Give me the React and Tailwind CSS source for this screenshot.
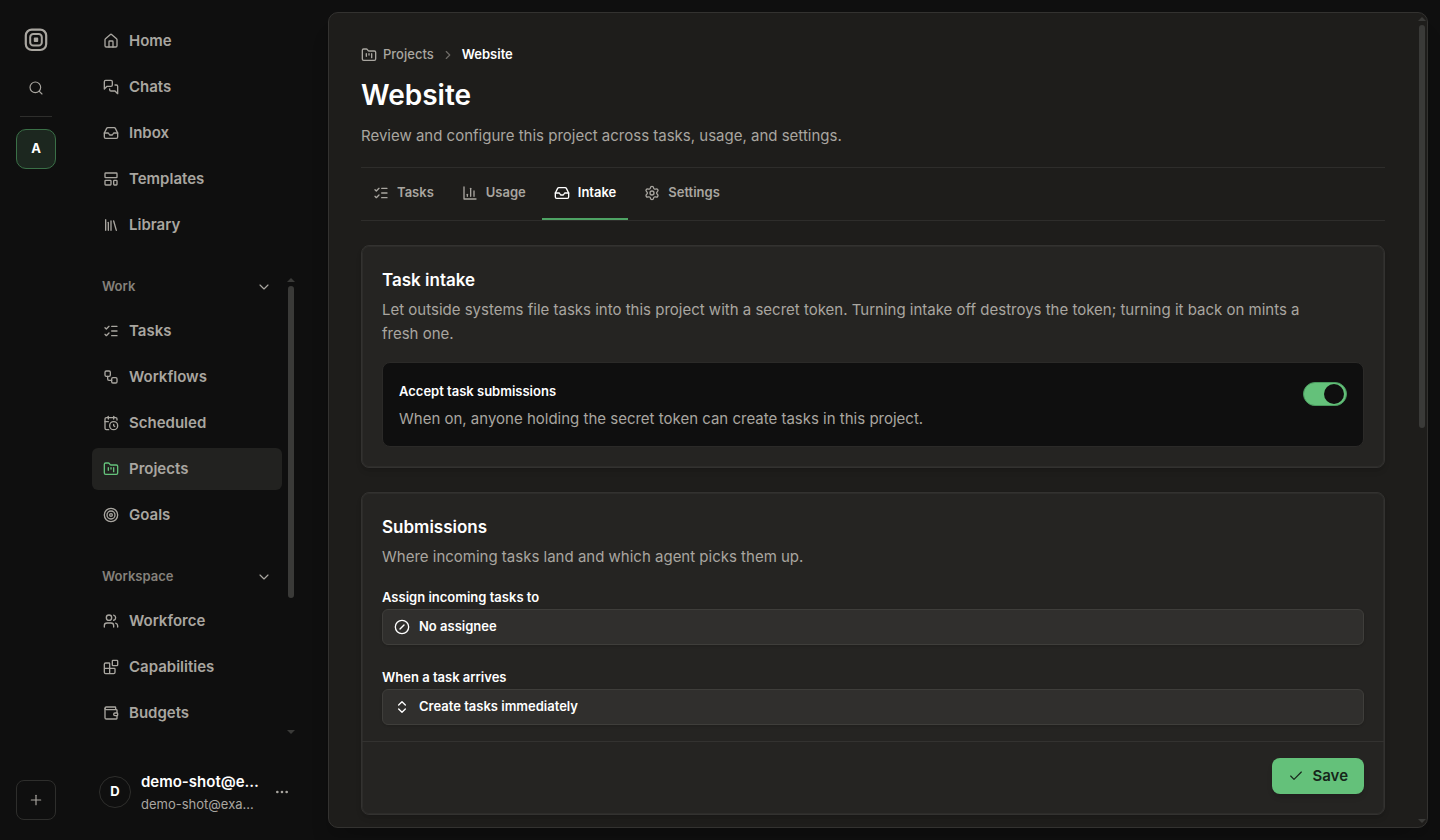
import {
  Blocks,
  CalendarClock,
  Check,
  ChevronDown,
  ChevronRight,
  ChevronsUpDown,
  CircleSlash,
  Ellipsis,
  FolderKanban,
  House,
  Inbox,
  LayoutTemplate,
  Library,
  ListChecks,
  Plus,
  Search,
  Settings,
  Target,
  Users,
  Wallet,
  Workflow,
} from "lucide-react";

function LineIcon({ className, children }) {
  return (
    <svg
      viewBox="0 0 24 24"
      className={className}
      fill="none"
      stroke="currentColor"
      strokeWidth="2"
      strokeLinecap="round"
      strokeLinejoin="round"
      aria-hidden="true"
    >
      {children}
    </svg>
  );
}

function ChatBubbles({ className }) {
  return (
    <LineIcon className={className}>
      <path d="M14 9a2 2 0 0 1-2 2H6l-4 4V4a2 2 0 0 1 2-2h8a2 2 0 0 1 2 2z" />
      <path d="M18 9h2a2 2 0 0 1 2 2v11l-4-4h-6a2 2 0 0 1-2-2v-1" />
    </LineIcon>
  );
}

function BarChart({ className }) {
  return (
    <LineIcon className={className}>
      <path d="M3 3v18h18" />
      <path d="M18 17V9" />
      <path d="M13 17V5" />
      <path d="M8 17v-3" />
    </LineIcon>
  );
}

const primary = [
  { label: "Home", icon: House },
  { label: "Chats", icon: ChatBubbles },
  { label: "Inbox", icon: Inbox },
  { label: "Templates", icon: LayoutTemplate },
  { label: "Library", icon: Library },
];

const sections = [
  {
    title: "Work",
    items: [
      { label: "Tasks", icon: ListChecks },
      { label: "Workflows", icon: Workflow },
      { label: "Scheduled", icon: CalendarClock },
      { label: "Projects", icon: FolderKanban, active: true },
      { label: "Goals", icon: Target },
    ],
  },
  {
    title: "Workspace",
    items: [
      { label: "Workforce", icon: Users },
      { label: "Capabilities", icon: Blocks },
      { label: "Budgets", icon: Wallet },
    ],
  },
];

const tabs = [
  { label: "Tasks", icon: ListChecks },
  { label: "Usage", icon: BarChart },
  { label: "Intake", icon: Inbox, active: true },
  { label: "Settings", icon: Settings },
];

function Logo() {
  return (
    <svg viewBox="0 0 24 24" className="size-6" fill="none" stroke="currentColor">
      <rect x="1.8" y="1.6" width="20.4" height="20.4" rx="6" strokeWidth="2.2" />
      <rect x="6.2" y="6" width="11.6" height="11.6" rx="3.2" strokeWidth="2" />
      <rect x="9.8" y="9.6" width="4.4" height="4.4" rx="0.8" fill="currentColor" stroke="none" />
    </svg>
  );
}

function ScrollTrack({ thumb }) {
  return (
    <div aria-hidden="true" className="flex w-2.5 shrink-0 flex-col items-center text-[#3a3a38]">
      <svg viewBox="0 0 8 4" className="my-1 h-1 w-2" fill="currentColor">
        <path d="M0 4 4 0l4 4z" />
      </svg>
      <div className="flex min-h-0 flex-1 flex-col">
        <div className={"w-1.5 rounded-full bg-[#3a3a38] " + thumb} />
      </div>
      <svg viewBox="0 0 8 4" className="my-1 h-1 w-2" fill="currentColor">
        <path d="M0 0 4 4l4-4z" />
      </svg>
    </div>
  );
}

function NavItem({ label, icon: Icon, active }) {
  return (
    <a
      href="#"
      aria-current={active ? "page" : undefined}
      className={
        "flex h-[42px] items-center gap-2.5 rounded-md px-[11px] text-[15px] font-semibold " +
        (active ? "bg-[#222220]" : "")
      }
    >
      <Icon className={"size-4 " + (active ? "text-[#64c17a]" : "")} />
      {label}
    </a>
  );
}

function Rail() {
  return (
    <div className="flex w-[72px] shrink-0 flex-col items-center pt-7 pb-5">
      <a href="#" aria-label="Start page">
        <Logo />
      </a>
      <button type="button" aria-label="Search" className="mt-5 flex size-8 items-center justify-center">
        <Search className="size-4" strokeWidth={1.75} />
      </button>
      <div className="mt-3 h-px w-8 bg-[#2e2e2c]" />
      <button
        type="button"
        className="mt-3 size-10 rounded-[10px] border border-[#3a7047] bg-[#1c271f] text-[13px] font-bold text-white"
      >
        A
      </button>
      <button
        type="button"
        aria-label="Add workspace"
        className="mt-auto flex size-10 items-center justify-center rounded-lg border border-[#2e2e2c]"
      >
        <Plus className="size-4" strokeWidth={1.75} />
      </button>
    </div>
  );
}

function Sidebar() {
  return (
    <div className="flex w-64 shrink-0 flex-col pt-5 pb-[26px] pl-5">
      <nav aria-label="Main" className="flex w-[190px] flex-col gap-1">
        {primary.map((item) => (
          <NavItem key={item.label} {...item} />
        ))}
      </nav>
      <div className="mt-7 flex min-h-0 flex-1 gap-1">
        <nav aria-label="Sections" className="flex w-[190px] flex-col gap-7 overflow-hidden">
          {sections.map((section) => (
            <div key={section.title} className="flex flex-col gap-2.5">
              <button
                type="button"
                className="flex h-[26px] items-center justify-between px-2.5 text-[13px] font-semibold text-[#85817b]"
              >
                {section.title}
                <ChevronDown className="size-4 text-[#a9a6a0]" strokeWidth={1.75} />
              </button>
              <div className="flex flex-col gap-1">
                {section.items.map((item) => (
                  <NavItem key={item.label} {...item} />
                ))}
              </div>
            </div>
          ))}
        </nav>
        <ScrollTrack thumb="h-[71%]" />
      </div>
      <div className="mt-8 flex items-center pl-[7px]">
        <span className="flex size-8 items-center justify-center rounded-full border border-[#2e2e2c] text-[13px] font-bold text-white">
          D
        </span>
        <div className="ml-2.5 w-[125px] whitespace-nowrap">
          <div className="text-[15px] leading-6 font-semibold text-white">demo-shot@e…</div>
          <div className="text-[13px] leading-5">demo-shot@exa…</div>
        </div>
        <button type="button" aria-label="Account menu" className="ml-2">
          <Ellipsis className="size-4" />
        </button>
      </div>
    </div>
  );
}

function Card({ title, description, children, footer }) {
  return (
    <section className="rounded-lg border border-[#333230] bg-[#252422] shadow-md inset-ring inset-ring-[#2d2c2a]">
      <div className={"px-5 pt-5 " + (footer ? "pb-4" : "pb-5")}>
        <h2 className="text-[17px] leading-7 font-semibold text-white">{title}</h2>
        <p className="mt-1 pr-8 text-[15px] leading-6">{description}</p>
        {children}
      </div>
      {footer}
    </section>
  );
}

function SelectField({ id, label, value, icon: Icon }) {
  return (
    <div>
      <label htmlFor={id} className="block text-[13px] leading-6 font-semibold text-white">
        {label}
      </label>
      <div className="relative text-white">
        <select
          id={id}
          className="block h-9 w-full appearance-none rounded-md border border-[#3f3e3b] bg-[#302f2d] pl-9 text-[13px] font-semibold shadow-sm"
        >
          <option>{value}</option>
        </select>
        <Icon className="pointer-events-none absolute top-2.5 left-3 size-4" />
      </div>
    </div>
  );
}

export default function App() {
  return (
    <div className="flex h-screen overflow-hidden bg-[#0f0f0f] font-['Inter',sans-serif] text-[#a9a6a0]">
      <Rail />
      <Sidebar />
      <div className="flex min-w-0 flex-1 py-3 pr-3">
        <div className="flex min-w-0 flex-1 overflow-hidden rounded-[10px] border border-[#333230] bg-[#1e1d1b] shadow-xl">
          <main className="min-w-0 flex-1 overflow-hidden px-8 pt-8">
            <nav aria-label="Breadcrumb" className="flex h-5 items-center text-[13px]">
              <a href="#" className="flex items-center gap-1.5 font-medium">
                <FolderKanban className="size-4" />
                Projects
              </a>
              <ChevronRight className="mx-[7px] size-3.5 text-[#6f6c67]" />
              <span className="font-semibold text-white">Website</span>
            </nav>
            <h1 className="mt-3 text-[28px] leading-9 font-semibold text-white">Website</h1>
            <p className="mt-[11px] text-[15px] leading-6">
              Review and configure this project across tasks, usage, and settings.
            </p>
            <div role="tablist" className="mt-[19px] flex h-[54px] gap-1 border-y border-[#2e2d2b]">
              {tabs.map(({ label, icon: Icon, active }) => (
                <button
                  key={label}
                  type="button"
                  role="tab"
                  aria-selected={!!active}
                  className={
                    "flex items-center gap-2 border-b-2 px-3 text-[13px] font-semibold " +
                    (active ? "border-[#4ea364] text-white" : "border-transparent")
                  }
                >
                  <Icon className="size-4" />
                  {label}
                </button>
              ))}
            </div>

            <div className="mt-6 flex flex-col gap-6">
              <Card
                title="Task intake"
                description="Let outside systems file tasks into this project with a secret token. Turning intake off destroys the token; turning it back on mints a fresh one."
              >
                <div className="mt-4 flex items-start justify-between rounded-lg border border-[#2b2a28] bg-[#0f0f0f] px-4 pt-4 pb-[15px]">
                  <div>
                    <label htmlFor="accept" className="block text-[13px] leading-6 font-semibold text-white">
                      Accept task submissions
                    </label>
                    <p id="accept-note" className="mt-1 text-[15px] leading-6">
                      When on, anyone holding the secret token can create tasks in this project.
                    </p>
                  </div>
                  <input
                    id="accept"
                    type="checkbox"
                    role="switch"
                    defaultChecked
                    aria-describedby="accept-note"
                    className="mt-[3px] flex h-6 w-11 shrink-0 appearance-none items-center rounded-full border border-[#4a9a5e] bg-[#64c17a] px-0.5 before:size-5 before:rounded-full before:bg-[#0f0f0f] checked:justify-end"
                  />
                </div>
              </Card>

              <Card
                title="Submissions"
                description="Where incoming tasks land and which agent picks them up."
                footer={
                  <div className="flex justify-end border-t border-[#333230] px-5 pt-4 pb-5">
                    <button
                      type="button"
                      className="flex h-9 items-center gap-2 rounded-lg bg-[#64c17a] px-4 text-[15px] font-semibold text-[#16261a] shadow-md"
                    >
                      <Check className="size-4" strokeWidth={1.75} />
                      Save
                    </button>
                  </div>
                }
              >
                <div className="mt-4 flex flex-col gap-5">
                  <SelectField id="assignee" label="Assign incoming tasks to" value="No assignee" icon={CircleSlash} />
                  <SelectField
                    id="arrival"
                    label="When a task arrives"
                    value="Create tasks immediately"
                    icon={ChevronsUpDown}
                  />
                </div>
              </Card>
            </div>
          </main>
          <ScrollTrack thumb="h-[51%]" />
        </div>
      </div>
    </div>
  );
}
